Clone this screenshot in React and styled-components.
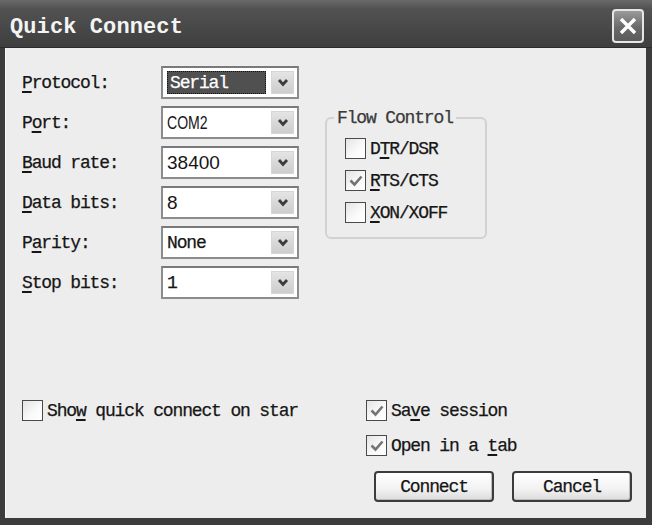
import React from 'react';
import styled, { createGlobalStyle } from 'styled-components';

const GlobalStyle = createGlobalStyle`
  html, body {
    margin: 0;
    padding: 0;
    background: #3a3a3a;
  }
  * {
    box-sizing: border-box;
  }
`;

const mono = `'Liberation Mono', 'DejaVu Sans Mono', monospace`;

const rows = [
  { label: 'Protocol:', value: 'Serial', selected: true },
  { label: 'Port:', keyAt: 1, value: 'COM2', sans: true, narrow: true },
  { label: 'Baud rate:', value: '38400', sans: true },
  { label: 'Data bits:', value: '8', sans: true },
  { label: 'Parity:', keyAt: 1, value: 'None' },
  { label: 'Stop bits:', value: '1' },
];

const flow = [
  { label: 'DTR/DSR', keyAt: 1, checked: false },
  { label: 'RTS/CTS', keyAt: 0, checked: true },
  { label: 'XON/XOFF', keyAt: 0, checked: false },
];

// underline the access key letter
const Mnemonic = ({ text, at = 0 }) => (
  <>
    {text.slice(0, at)}
    <Key>{text[at]}</Key>
    {text.slice(at + 1)}
  </>
);

const Chevron = () => (
  <svg width="12" height="9" viewBox="0 0 12 9">
    <path d="M2 2 L6 6.5 L10 2" fill="none" stroke="#3c3c3c" strokeWidth="2.8" />
  </svg>
);

const Tick = () => (
  <svg width="16" height="16" viewBox="0 0 16 16">
    <path d="M2.5 7.5 L6.5 11.5 L13.5 3.5" fill="none" stroke="#747474" strokeWidth="2.6" />
  </svg>
);

const Check = ({ checked, label, keyAt }) => (
  <CheckRow>
    <Box>{checked && <Tick />}</Box>
    <span>
      <Mnemonic text={label} at={keyAt} />
    </span>
  </CheckRow>
);

const Combo = ({ value, selected, sans, narrow }) => (
  <ComboBox>
    <Field>
      {selected ? (
        <Selection>{value}</Selection>
      ) : (
        <Value $sans={sans} $narrow={narrow}>
          {value}
        </Value>
      )}
    </Field>
    <DropButton>
      <Chevron />
    </DropButton>
  </ComboBox>
);

export default function App() {
  return (
    <Window>
      <GlobalStyle />
      <TitleBar>
        <Title>Quick Connect</Title>
        <CloseButton>
          <svg width="20" height="20" viewBox="0 0 20 20">
            <path d="M3 3 L17 17 M17 3 L3 17" stroke="#fff" strokeWidth="3.4" />
          </svg>
        </CloseButton>
      </TitleBar>
      <Body>
        <TopSection>
          <Form>
            {rows.map((r) => (
              <React.Fragment key={r.label}>
                <Label>
                  <Mnemonic text={r.label} at={r.keyAt ?? 0} />
                </Label>
                <Combo value={r.value} selected={r.selected} sans={r.sans} narrow={r.narrow} />
              </React.Fragment>
            ))}
          </Form>
          <Group>
            <Legend>Flow Control</Legend>
            <FlowList>
              {flow.map((f) => (
                <Check key={f.label} {...f} />
              ))}
            </FlowList>
          </Group>
        </TopSection>
        <BottomSection>
          <Check label="Show quick connect on star" keyAt={3} checked={false} />
          <RightColumn>
            <Check label="Save session" keyAt={2} checked />
            <Check label="Open in a tab" keyAt={10} checked />
            <ButtonRow>
              <Button>Connect</Button>
              <Button>Cancel</Button>
            </ButtonRow>
          </RightColumn>
        </BottomSection>
      </Body>
    </Window>
  );
}

// STYLES
const Window = styled.div`
  width: 652px;
  height: 525px;
  display: flex;
  flex-direction: column;
  background: #3c3c3c;
  overflow: hidden;
`;

const TitleBar = styled.div`
  height: 48px;
  flex: none;
  display: flex;
  align-items: center;
  justify-content: space-between;
  padding: 0 8px 0 10px;
  background: linear-gradient(to bottom, #6a6a6a 0%, #525252 18%, #484848 60%, #3e3e3e 100%);
  border-bottom: 1px solid #2c2c2c;
`;

const Title = styled.div`
  font-family: ${mono};
  font-weight: bold;
  font-size: 22px;
  letter-spacing: 0.1px;
  color: #f4f4f4;
  margin-top: 7px;
`;

const CloseButton = styled.div`
  width: 32px;
  height: 34px;
  margin-top: 4px;
  display: flex;
  align-items: center;
  justify-content: center;
  border: 2px solid #e6e6e6;
  border-radius: 4px;
  background: linear-gradient(to bottom, #9a9a9a, #6a6a6a 55%, #5a5a5a);
`;

const Body = styled.div`
  flex: 1;
  margin: 0 6px 7px 5px;
  border-left: 1px solid #fafafa;
  background: #ededed;
  display: flex;
  flex-direction: column;
  justify-content: space-between;
  padding: 18px 14px 16px 16px;
  font-family: ${mono};
  font-size: 18px;
  letter-spacing: -1.15px;
  color: #161616;
  -webkit-text-stroke: 0.25px #161616;
`;

const TopSection = styled.div`
  display: flex;
  align-items: flex-start;
  gap: 26px;
`;

const Form = styled.div`
  display: grid;
  grid-template-columns: 139px 138px;
  grid-auto-rows: 33px;
  row-gap: 7px;
  align-items: center;
`;

const Label = styled.div`
  white-space: nowrap;
`;

const Key = styled.span`
  text-decoration: underline;
  text-underline-offset: 3px;
  text-decoration-thickness: 1.5px;
`;

const ComboBox = styled.div`
  height: 33px;
  display: flex;
  align-items: stretch;
  padding: 3px;
  background: #fff;
  border: 2px solid #8c8c8c;
  border-top-color: #7a7a7a;
`;

const Field = styled.div`
  flex: 1;
  display: flex;
  align-items: center;
  padding-left: 1px;
  overflow: hidden;
`;

const Value = styled.span`
  display: inline-block;
  white-space: nowrap;
  font-family: ${({ $sans }) => ($sans ? `'Liberation Sans', Arial, sans-serif` : mono)};
  font-size: ${({ $sans }) => ($sans ? '19px' : '18px')};
  letter-spacing: ${({ $sans }) => ($sans ? '0' : '-1.15px')};
  -webkit-text-stroke: ${({ $sans }) => ($sans ? '0' : '0.25px #161616')};
  transform: ${({ $narrow }) => ($narrow ? 'scaleX(0.74)' : 'none')};
  transform-origin: left center;
`;

const Selection = styled.span`
  flex: 1;
  align-self: stretch;
  display: flex;
  align-items: center;
  padding-left: 3px;
  margin-right: 5px;
  background: #505050;
  color: #fff;
  -webkit-text-stroke: 0.25px #fff;
  outline: 1px dotted #111;
  outline-offset: -1px;
`;

const DropButton = styled.div`
  width: 23px;
  flex: none;
  display: flex;
  align-items: center;
  justify-content: center;
  background: linear-gradient(to bottom, #e4e4e4, #cdcdcd);
  border: 1px solid #d6d6d6;
`;

const Group = styled.fieldset`
  margin: 42px 0 0 0;
  width: 162px;
  height: 131px;
  padding: 10px 0 0 18px;
  border: 2px solid #d2d2d2;
  border-radius: 6px;
`;

const Legend = styled.legend`
  padding: 0 3px;
  margin-left: -11px;
  color: #3a3a3a;
  -webkit-text-stroke: 0.25px #3a3a3a;
`;

const FlowList = styled.div`
  display: flex;
  flex-direction: column;
  gap: 11px;
`;

const CheckRow = styled.div`
  display: flex;
  align-items: center;
  gap: 4px;
  height: 21px;
  white-space: nowrap;
`;

const Box = styled.span`
  width: 21px;
  height: 21px;
  flex: none;
  display: flex;
  align-items: center;
  justify-content: center;
  border: 1.5px solid #4a4a4a;
  background: linear-gradient(135deg, #e4e4e4, #fafafa 60%, #ffffff);
`;

const BottomSection = styled.div`
  display: flex;
  align-items: flex-start;
  justify-content: space-between;
`;

const RightColumn = styled.div`
  width: 266px;
  display: flex;
  flex-direction: column;
  gap: 14px;
`;

const ButtonRow = styled.div`
  display: flex;
  gap: 18px;
  padding-left: 8px;
  margin-top: 1px;
`;

const Button = styled.div`
  width: 120px;
  height: 31px;
  display: flex;
  align-items: center;
  justify-content: center;
  border: 2px solid #3c3c3c;
  border-radius: 4px;
  background: linear-gradient(to bottom, #ffffff, #f2f2f2 60%, #dcdcdc);
  box-shadow: inset -1px -1px 0 #bdbdbd;
`;
